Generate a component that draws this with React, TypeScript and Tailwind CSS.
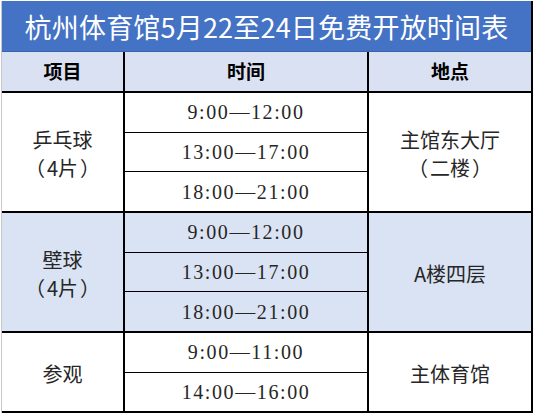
const groups = [
  {
    name: ['乒乓球', '（4片）'],
    times: ['9:00—12:00', '13:00—17:00', '18:00—21:00'],
    place: ['主馆东大厅', '（二楼）'],
    shaded: false,
    height: 'h-[120px]',
  },
  {
    name: ['壁球', '（4片）'],
    times: ['9:00—12:00', '13:00—17:00', '18:00—21:00'],
    place: ['A楼四层'],
    shaded: true,
    height: 'h-[120px]',
  },
  {
    name: ['参观'],
    times: ['9:00—11:00', '14:00—16:00'],
    place: ['主体育馆'],
    shaded: false,
    height: 'h-[80px]',
  },
];

const cjkFont = "font-['Noto_Sans_CJK_SC',sans-serif]";
const timeFont = "font-['Liberation_Serif','Noto_Sans_CJK_SC',serif]";

// fullwidth brackets get trimmed by the browser, so give them a full em box
function Line({ text }: { text: string }) {
  return (
    <span className="whitespace-nowrap">
      {Array.from(text).map((ch, i) =>
        ch === '（' || ch === '）' ? (
          <span key={i} className="inline-block w-[24px] text-center">
            {ch}
          </span>
        ) : (
          <span key={i}>{ch}</span>
        )
      )}
    </span>
  );
}

export default function App() {
  return (
    <div className="w-[534px] h-[416px] bg-white overflow-hidden">
      <div className="ml-px w-[532px] border-l border-[#c8c8c8] border-r-2 border-r-black">
        {/* Title */}
        <div className="mt-px h-[51px] bg-[#4472c4] border-b border-[#3a62a8] flex items-center justify-center">
          <h1 className={`text-[27px] leading-none text-white ${cjkFont} tracking-[0.2px]`}>
            杭州体育馆5月22至24日免费开放时间表
          </h1>
        </div>

        {/* Header */}
        <div className={`h-[41px] bg-[#d9e1f2] border-b-2 border-black flex ${cjkFont} font-bold text-[19px] text-black`}>
          <div className="w-[123px] border-r-2 border-black flex items-center justify-center">项目</div>
          <div className="w-[244px] border-r-2 border-black flex items-center justify-center">时间</div>
          <div className="flex-1 flex items-center justify-center">地点</div>
        </div>

        {groups.map((g) => (
          <div
            key={g.name[0]}
            className={`${g.height} flex border-b-2 border-black text-[#262626] ${g.shaded ? 'bg-[#dae3f3]' : 'bg-white'}`}
          >
            <div className={`w-[123px] border-r-2 border-black flex flex-col items-center justify-center pt-[4px] text-[20px] leading-[28px] ${cjkFont}`}>
              {g.name.map((n) => (
                <Line key={n} text={n} />
              ))}
            </div>
            <div className={`w-[244px] border-r-2 border-black flex flex-col divide-y divide-black ${timeFont}`}>
              {g.times.map((t) => (
                <div key={t} className="flex-1 flex items-center justify-center text-[20px] tracking-[1.6px]">
                  {t}
                </div>
              ))}
            </div>
            <div className={`flex-1 flex flex-col items-center justify-center pt-[4px] text-[20px] leading-[28px] ${cjkFont}`}>
              {g.place.map((p) => (
                <Line key={p} text={p} />
              ))}
            </div>
          </div>
        ))}
      </div>
    </div>
  );
}
